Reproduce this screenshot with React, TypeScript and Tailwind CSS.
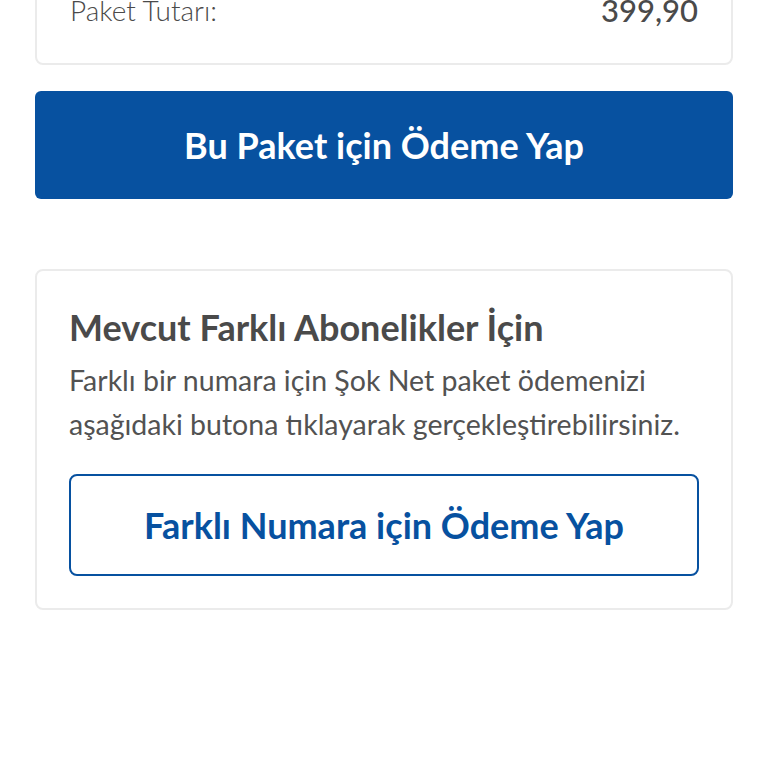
import React from 'react'

const font = { fontFamily: 'Lato, "Open Sans", sans-serif' }

export default function App() {
  return (
    <div className="w-[768px] h-[768px] overflow-hidden bg-white" style={font}>
      <div className="px-[35px] -mt-[40px]">
        <div className="rounded-[8px] border-2 border-[#ebebeb] px-[33px] pt-[30px] pb-[35px]">
          <div className="flex items-center justify-between h-[36px] text-[#4a4a4a]">
            <span className="text-[28px] font-light">Paket Tutarı:</span>
            <span className="text-[31px] font-medium">399,90</span>
          </div>
        </div>

        <button className="mt-[26px] w-full h-[108px] rounded-[6px] bg-[#0751a0] text-white text-[36px] font-bold">
          Bu Paket için Ödeme Yap
        </button>

        <div className="mt-[70px] rounded-[8px] border-2 border-[#ebebeb] px-[32px] pt-[32px] pb-[32px]">
          <h2 className="text-[36px] font-bold text-[#4a4a4a] leading-[48px]">Mevcut Farklı Abonelikler İçin</h2>
          <p className="mt-[7px] text-[28.5px] text-[#525252] leading-[44px]">
            Farklı bir numara için Şok Net paket ödemenizi
            <br />
            aşağıdaki butona tıklayarak gerçekleştirebilirsiniz.
          </p>
          <button className="mt-[28px] w-full h-[102px] rounded-[8px] border-2 border-[#0751a0] bg-white text-[#0751a0] text-[36px] font-bold">
            Farklı Numara için Ödeme Yap
          </button>
        </div>
      </div>
    </div>
  )
}
